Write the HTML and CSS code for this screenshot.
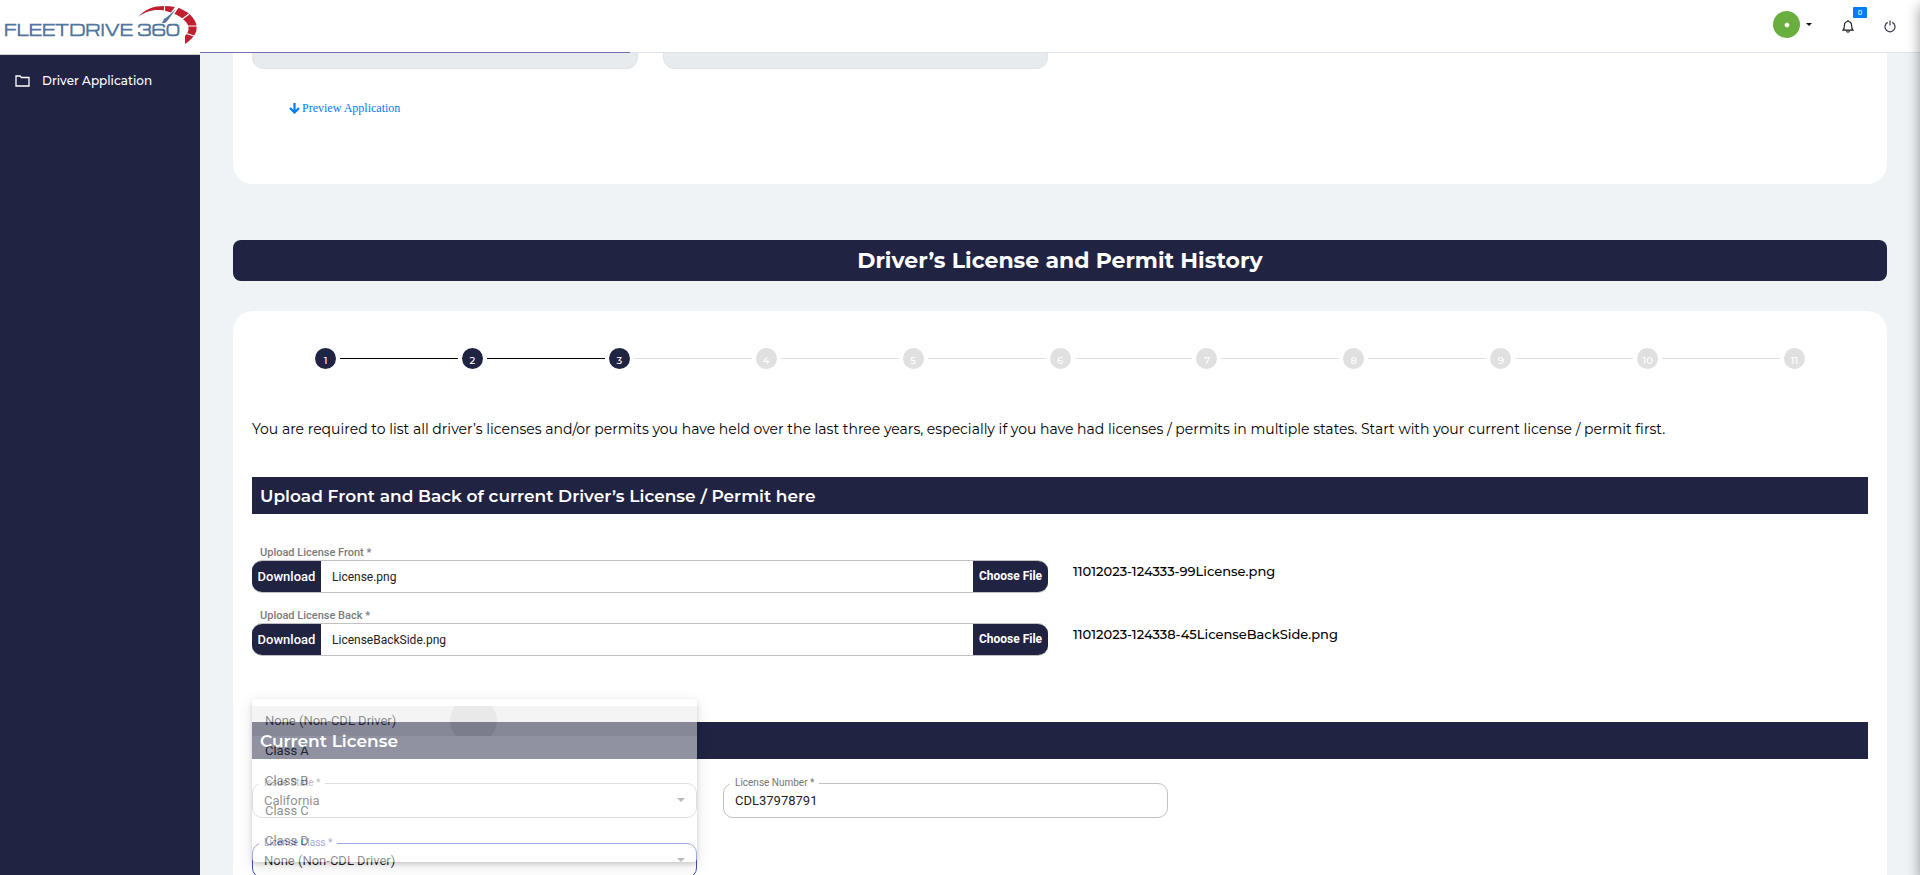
FILE: index.html
```html
<!DOCTYPE html>
<html lang="en">
<head>
<meta charset="utf-8">
<meta name="viewport" content="width=device-width, initial-scale=1">
<title>FleetDrive 360 – Driver Application</title>
<link rel="stylesheet" href="styles.css">
</head>
<body>
<div class="app">
  <aside class="sidebar">
    <a class="brand" href="#" aria-label="FleetDrive 360">
      <svg class="brand-logo" width="200" height="50" viewBox="0 0 200 50" role="img" aria-label="FleetDrive 360 logo">
        <text class="brand-text" x="4" y="36">FLEETDRIVE 360</text>
        <path fill="#c11f2f" d="M138 17C145 9 154 6 164 6C180 6 190 12 195 21C199 29 196 37 185 44L185 36C189 32 190 27 186 22C181 16 174 13 164 10.500C154 9 146 11 138 17Z"/>
        <path stroke="#fff" stroke-width="1.200" d="M164.500 5V12M189 14L181 20M198 26H185M197 37L185 33"/>
        <path stroke="#fff" stroke-width="3.500" d="M177 7L170 17"/>
        <path fill="#51779f" d="M176 9L168 20L165 23H162L164 19L167 17Z"/>
      </svg>
    </a>
    <nav class="side-nav">
      <a class="side-link" href="#">
        <svg width="15" height="12" viewBox="0 0 15 12" fill="none" stroke="currentColor" stroke-width="1.300"><path d="M1 11V1H5L6.500 2.500H14V11Z"/></svg>
        <span>Driver Application</span>
      </a>
    </nav>
  </aside>

  <div class="page">
    <header class="topbar">
      <button class="avatar-button" type="button" aria-label="Account menu">
        <span class="avatar"><svg width="8" height="8" viewBox="0 0 8 8"><circle cx="4" cy="4" r="2" fill="#fff"/><path d="M4 1V7M1 4H7M2 2L6 6M6 2L2 6" stroke="#fff" stroke-opacity=".6"/></svg></span>
        <span class="caret"></span>
      </button>
      <button class="icon-button bell" type="button" aria-label="Notifications">
        <svg width="12" height="13" viewBox="0 0 12 13" fill="none" stroke="#222" stroke-width="1.200"><path d="M6 0V1.500M1 10.200H11C9.600 9 9.600 8 9.600 5.500C9.600 3 8.200 1.500 6 1.500S2.400 3 2.400 5.500C2.400 8 2.400 9 1 10.200ZM4.600 10.800C4.800 12.700 7.200 12.700 7.400 10.800"/></svg>
        <span class="badge">0</span>
      </button>
      <button class="icon-button" type="button" aria-label="Log out">
        <svg width="12" height="13" viewBox="0 0 12 13" fill="none" stroke="#3a3650" stroke-width="1.200"><path d="M3.700 2.400A5 5 0 1 0 8.300 2.400M6 .5V5.500"/></svg>
      </button>
      <div class="scroll-progress"></div>
    </header>

    <main class="content">
      <section class="card card-top">
        <div class="readonly-row">
          <input class="readonly-input" type="text" aria-label="First value" disabled>
          <input class="readonly-input" type="text" aria-label="Second value" disabled>
        </div>
        <a class="preview-link" href="#">
          <svg width="11" height="11" viewBox="0 0 11 11" fill="none" stroke="currentColor" stroke-width="2.200"><path d="M5.500 0V9.500M1 5L5.500 9.500L10 5"/></svg>
          <span>Preview Application</span>
        </a>
      </section>

      <h1 class="page-title">Driver’s License and Permit History</h1>

      <section class="card card-main">
        <ol class="steps">
          <li class="step done">1</li>
          <li class="line done"></li>
          <li class="step done">2</li>
          <li class="line done"></li>
          <li class="step done">3</li>
          <li class="line"></li>
          <li class="step">4</li>
          <li class="line"></li>
          <li class="step">5</li>
          <li class="line"></li>
          <li class="step">6</li>
          <li class="line"></li>
          <li class="step">7</li>
          <li class="line"></li>
          <li class="step">8</li>
          <li class="line"></li>
          <li class="step">9</li>
          <li class="line"></li>
          <li class="step">10</li>
          <li class="line"></li>
          <li class="step">11</li>
        </ol>

        <p class="intro">You are required to list all driver’s licenses and/or permits you have held over the last three years, especially if you have had licenses / permits in multiple states. Start with your current license / permit first.</p>

        <h2 class="section-title">Upload Front and Back of current Driver’s License / Permit here</h2>

        <div class="uploads">
          <div class="upload">
            <label class="upload-label" for="front">Upload License Front *</label>
            <div class="upload-box">
              <button class="upload-button download" type="button">Download</button>
              <input class="upload-input" id="front" type="text" value="License.png" readonly>
              <button class="upload-button choose" type="button">Choose File</button>
            </div>
          </div>
          <div class="stored-name">11012023-124333-99License.png</div>
          <div class="upload">
            <label class="upload-label" for="back">Upload License Back *</label>
            <div class="upload-box">
              <button class="upload-button download" type="button">Download</button>
              <input class="upload-input" id="back" type="text" value="LicenseBackSide.png" readonly>
              <button class="upload-button choose" type="button">Choose File</button>
            </div>
          </div>
          <div class="stored-name">11012023-124338-45LicenseBackSide.png</div>
        </div>

        <h2 class="section-title">Current License</h2>

        <div class="fields">
          <div class="field">
            <label class="field-label" for="state">Issue State *</label>
            <select class="control" id="state"><option>California</option></select>
            <span class="arrow"></span>
          </div>
          <div class="field">
            <label class="field-label" for="number">License Number *</label>
            <input class="control" id="number" type="text" value="CDL37978791">
          </div>
          <div class="field active">
            <label class="field-label" for="class">License Class *</label>
            <select class="control" id="class"><option>None (Non-CDL Driver)</option></select>
            <span class="arrow"></span>
            <ul class="menu" role="listbox" aria-label="License Class">
              <li class="menu-item selected" role="option" aria-selected="true">None (Non-CDL Driver)<span class="ripple"></span></li>
              <li class="menu-item" role="option">Class A</li>
              <li class="menu-item" role="option">Class B</li>
              <li class="menu-item" role="option">Class C</li>
              <li class="menu-item" role="option">Class D</li>
            </ul>
          </div>
        </div>
      </section>
    </main>
  </div>
</div>
<div class="edge-shadow"></div>
</body>
</html>
```

FILE: styles.css
```css
:root {
  --navy: #212343;
  --line: #c1c1c1;
  --heading: Montserrat, Inter, "Open Sans", sans-serif;
  --body: Roboto, "Open Sans", sans-serif;
}

* { box-sizing: border-box; }

body {
  margin: 0;
  overflow: hidden;
  background: #eff3f6;
  font-family: var(--body);
  color: #000;
}

button, input, select { font-family: inherit; margin: 0; }
button { border: 0; cursor: pointer; }
ul, ol { list-style: none; margin: 0; padding: 0; }
svg { flex: none; display: block; }

.app {
  display: grid;
  grid-template-columns: 200px minmax(0, 1fr);
  height: 100vh;
  overflow: hidden;
}

/* Sidebar */
.sidebar { background: var(--navy); }
.brand {
  display: block;
  height: 55px;
  background: #fff;
  border-bottom: 1px solid #ccc;
}
.brand-text {
  font: bold 15px Michroma, Orbitron, Audiowide, "DejaVu Sans", sans-serif;
  fill: #51779f;
}
.side-nav { padding: 16px 15px; }
.side-link {
  display: flex;
  align-items: center;
  gap: 12px;
  color: #fff;
  font: 500 12px/20px var(--heading);
  text-decoration: none;
}

/* Top bar */
.page { min-width: 0; display: flex; flex-direction: column; }
.topbar {
  position: relative;
  flex: none;
  display: flex;
  justify-content: flex-end;
  align-items: center;
  gap: 30px;
  height: 53px;
  padding: 0 24px 3px 0;
  background: #fff;
  border-bottom: 1px solid #dde3ea;
}
.scroll-progress {
  position: absolute;
  left: 0;
  bottom: -1px;
  width: 25%;
  height: 1px;
  background: #7272a8;
}
.avatar-button {
  display: flex;
  align-items: center;
  gap: 6px;
  padding: 0;
  background: none;
}
.avatar {
  display: grid;
  place-items: center;
  width: 27px;
  height: 27px;
  border-radius: 50%;
  background: #69ae3e;
}
.caret {
  border: 3px solid transparent;
  border-top-color: #111;
  border-bottom: 0;
}
.icon-button {
  position: relative;
  padding: 3px 0 0;
  background: none;
}
.badge {
  position: absolute;
  left: 11px;
  top: -10px;
  width: 14px;
  border-radius: 1px;
  background: #007bff;
  color: #fff;
  font-size: 8px;
  line-height: 11px;
  text-align: center;
}

/* Cards */
.content { flex: 1; min-height: 0; padding: 0 33px; overflow: hidden; }
.card { background: #fff; padding: 0 19px; }
.card-top { height: 131px; border-radius: 0 0 20px 20px; }
.readonly-row {
  display: grid;
  grid-template-columns: repeat(2, minmax(0, 1fr));
  gap: 25px;
  max-width: 796px;
}
.readonly-input {
  width: 100%;
  height: 16px;
  border: 1px solid #dfe5ea;
  border-top: 0;
  border-radius: 0 0 12px 12px;
  background: #e7ebee;
}
.preview-link {
  display: inline-flex;
  align-items: center;
  gap: 2px;
  margin: 30px 37px 0;
  color: #007bff;
  font: 12px/18px "Liberation Serif", serif;
  text-decoration: none;
}
.page-title {
  margin: 56px 0 30px;
  border-radius: 8px;
  background: var(--navy);
  color: #fff;
  font: bold 22px/41px var(--heading);
  text-align: center;
}
.card-main { height: 700px; padding-top: 37px; border-radius: 20px 20px 0 0; }

/* Stepper */
.steps {
  display: flex;
  align-items: center;
  gap: 4px;
  padding: 0 63px;
}
.step {
  flex: none;
  width: 21px;
  height: 21px;
  padding-top: 4px;
  border-radius: 50%;
  background: #e0e0e0;
  color: #fff;
  font: 500 10px/18px var(--heading);
  text-align: center;
}
.step.done { background: var(--navy); }
.line { flex: 1; height: 1px; background: #e0e0e0; }
.line.done { background: #000; }

.intro {
  margin: 50px 0 38px;
  font: 450 14px/20px var(--heading);
}
.section-title {
  margin: 0;
  padding: 2px 8px 0;
  background: var(--navy);
  color: #fff;
  font: 600 17px/35px var(--heading);
}

/* Uploads */
.uploads {
  display: grid;
  grid-template-columns: minmax(0, 796px) minmax(0, 1fr);
  column-gap: 25px;
  row-gap: 14px;
  padding: 30px 0 66px;
}
.upload-label {
  display: block;
  width: max-content;
  padding: 2px 0 0 8px;
  color: #7b7b7b;
  font-size: 11px;
  font-weight: 500;
  line-height: 14px;
}
.upload-box {
  display: flex;
  height: 33px;
  overflow: hidden;
  border: solid var(--line);
  border-width: 1px 0;
  border-radius: 10px;
}
.upload-input {
  flex: 1;
  min-width: 0;
  padding: 0 11px;
  border: 0;
  color: #222;
  font-size: 12px;
  outline: 0;
}
.upload-button {
  flex: none;
  padding: 0;
  background: var(--navy);
  color: #fff;
}
.download { width: 69px; font-size: 13px; font-weight: 500; }
.choose { width: 75px; padding-bottom: 2px; font-size: 12px; font-weight: 700; }
.stored-name { padding-top: 17px; font: 500 13px/20px var(--heading); }

/* Outlined fields */
.fields {
  display: grid;
  grid-template-columns: repeat(2, 445px);
  column-gap: 26px;
  row-gap: 25px;
  padding-top: 24px;
}
.field { position: relative; grid-column: 1; }
.field:nth-child(2) { grid-column: 2; }
.field-label {
  position: absolute;
  left: 7px;
  top: -6px;
  padding: 0 5px;
  background: #fff;
  color: #757575;
  font-size: 10px;
  line-height: 12px;
}
.control {
  display: block;
  width: 100%;
  height: 35px;
  padding: 0 11px;
  border: 1px solid var(--line);
  border-radius: 10px;
  background: #fff;
  appearance: none;
  color: #222;
  font-size: 13px;
  outline: 0;
}
.arrow {
  position: absolute;
  right: 12px;
  top: 15px;
  border: 4px solid transparent;
  border-top-color: #757575;
  border-bottom: 0;
}
.active .control { border-color: #3f51b5; }
.active .field-label { color: #3f51b5; }

/* Option list fading over the form */
.menu {
  position: absolute;
  z-index: 2;
  left: 0;
  top: -144px;
  width: 100%;
  height: 163px;
  padding-top: 7px;
  overflow: hidden;
  border-radius: 4px;
  background: #fff;
  box-shadow: 0 2px 4px rgba(0, 0, 0, .3), 0 4px 14px rgba(0, 0, 0, .2);
  opacity: .5;
}
.menu-item {
  position: relative;
  height: 30px;
  padding: 0 13px;
  overflow: hidden;
  color: #222;
  font-size: 13px;
  line-height: 30px;
}
.menu-item.selected { background: #ebebeb; }
.ripple {
  position: absolute;
  left: 198px;
  top: -9px;
  width: 47px;
  height: 47px;
  border-radius: 50%;
  background: rgba(0, 0, 0, .09);
}

.edge-shadow {
  position: fixed;
  left: 100%;
  top: 6px;
  width: 20px;
  height: 100%;
  box-shadow: 0 0 14px rgba(0, 0, 0, .4);
}
```
